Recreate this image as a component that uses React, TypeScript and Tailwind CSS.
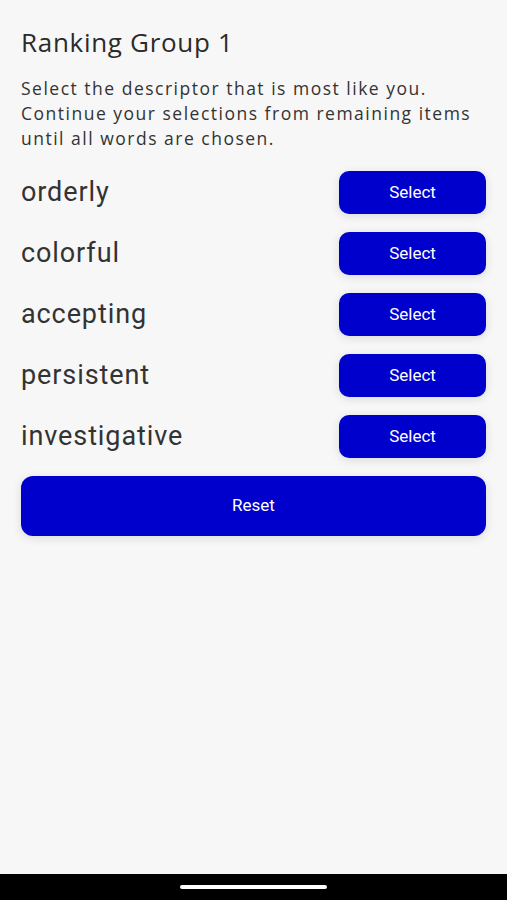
export default function App() {
  const words = ['orderly', 'colorful', 'accepting', 'persistent', 'investigative']

  return (
    <div className="h-[900px] w-full flex flex-col bg-[#f7f7f7]">
      <main className="flex-1 px-[21px] pt-[26px]">
        <h1 className="text-[26px] leading-[32px] text-[#2b2b2b] font-['Open_Sans',sans-serif] tracking-[0.7px]">
          Ranking Group 1
        </h1>
        <p className="mt-[18px] text-[17.5px] leading-[25px] text-[#333] font-['Open_Sans',sans-serif] tracking-[1.5px] whitespace-nowrap">
          Select the descriptor that is most like you.
          <br />
          Continue your selections from remaining items
          <br />
          until all words are chosen.
        </p>

        <div className="mt-[20px] flex flex-col gap-[18px]">
          {words.map((w) => (
            <div key={w} className="flex items-center justify-between">
              <span className="text-[27px] text-[#333] font-['Roboto',sans-serif] tracking-[0.9px]">{w}</span>
              <button className="w-[147px] h-[43px] rounded-[10px] bg-[#0000cd] text-white text-[17px] font-['Roboto',sans-serif] shadow-[0_2px_10px_rgba(0,0,0,0.12)]">
                Select
              </button>
            </div>
          ))}
        </div>

        <button className="mt-[18px] w-full h-[60px] rounded-[12px] bg-[#0000cd] text-white text-[17px] font-['Roboto',sans-serif] shadow-[0_2px_10px_rgba(0,0,0,0.12)]">
          Reset
        </button>
      </main>

      <div className="h-[26px] bg-black flex items-center justify-center">
        <div className="w-[147px] h-[4px] rounded-full bg-white" />
      </div>
    </div>
  )
}
